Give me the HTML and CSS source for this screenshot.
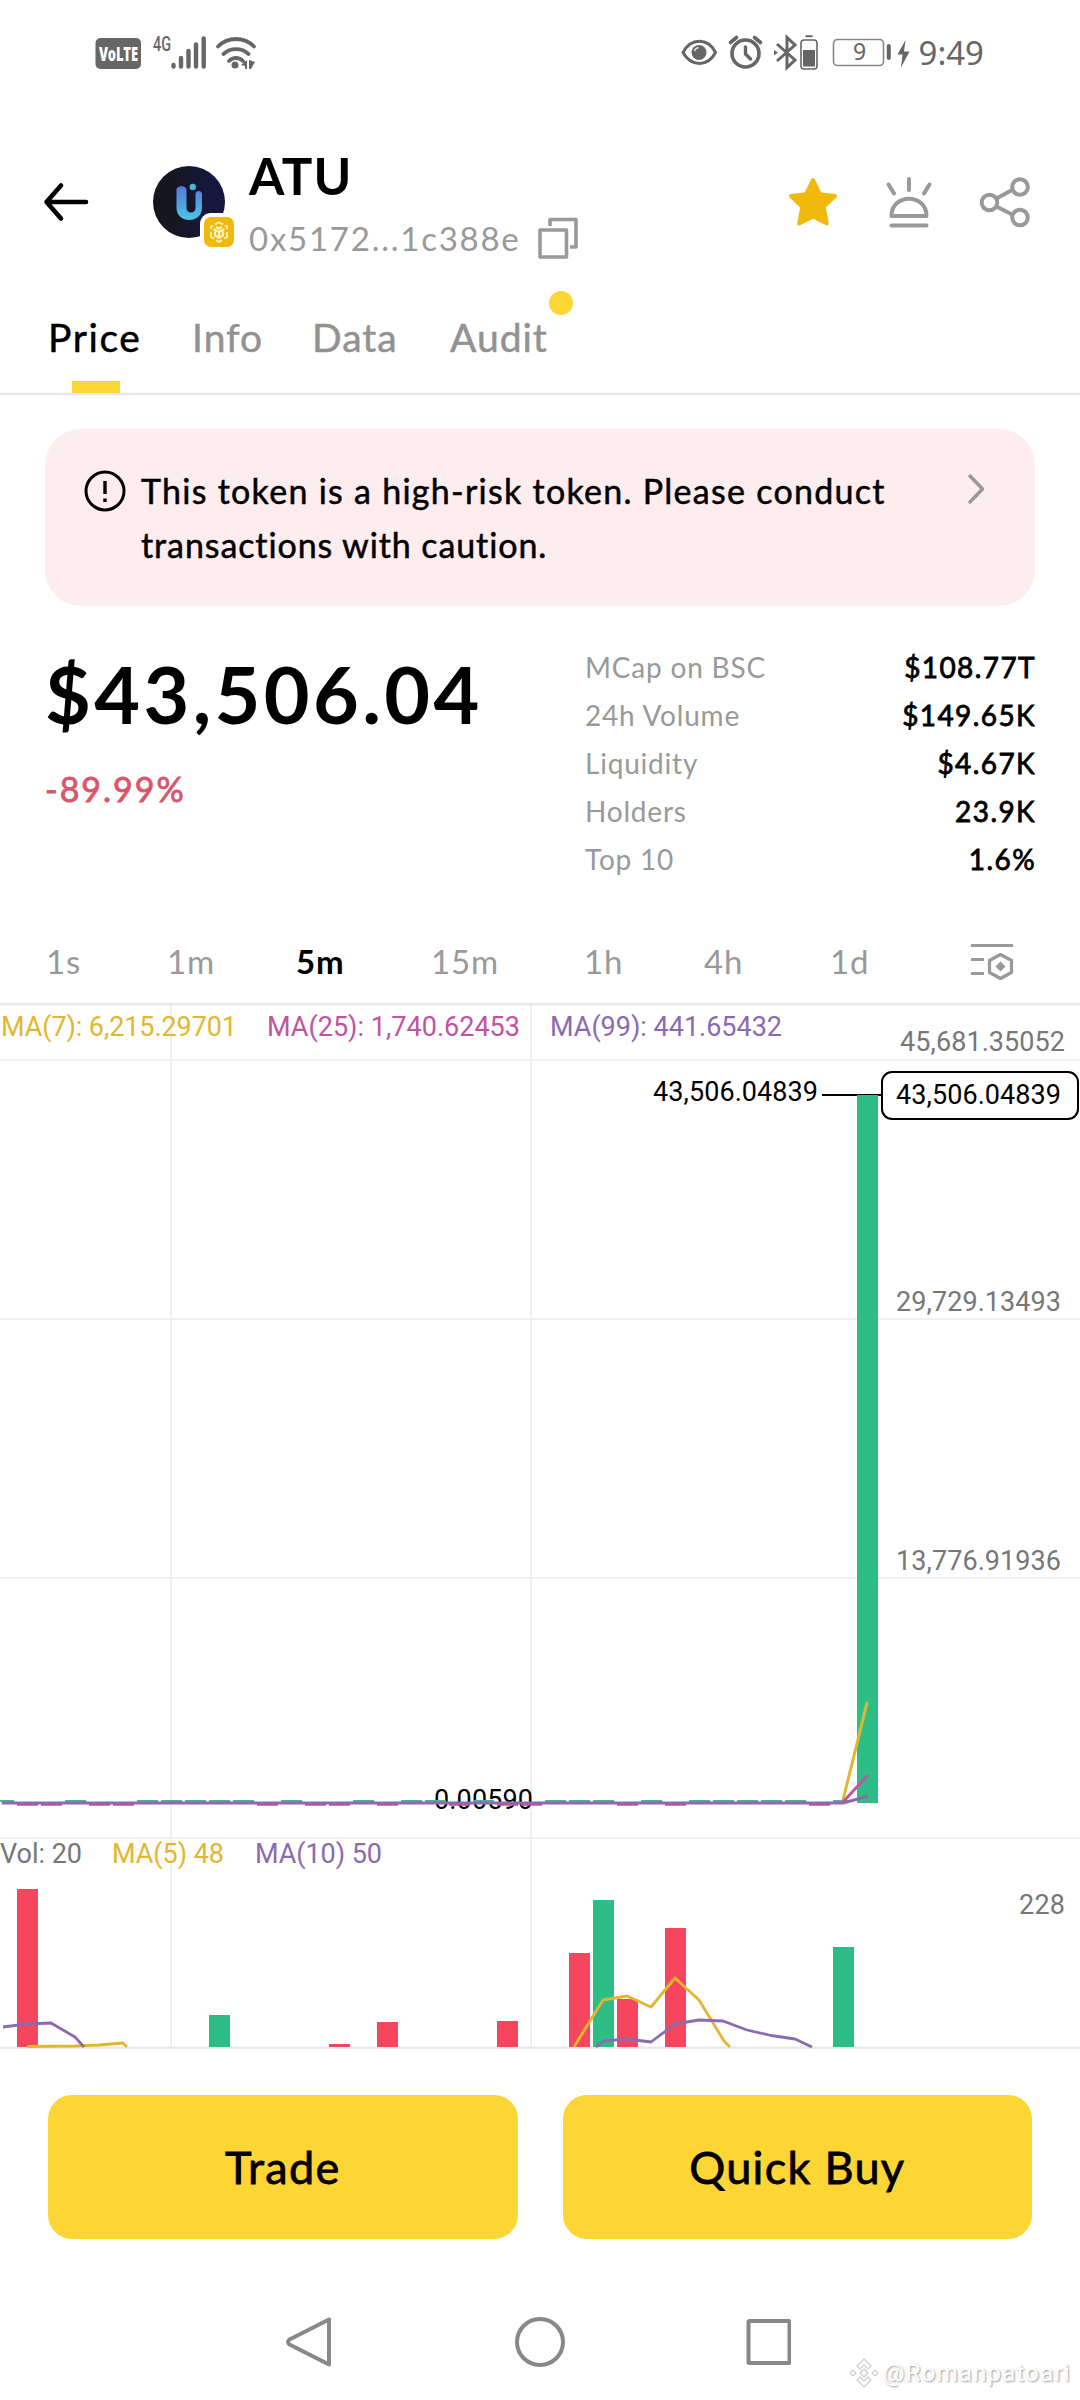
FILE: index.html
```html
<!DOCTYPE html>
<html lang="en">
<head>
    <meta charset="UTF-8">
    <meta name="viewport" content="width=device-width, initial-scale=1.0">
    <title>ATU - Price</title>
    <link rel="stylesheet" href="styles.css">
</head>
<body>
    <div class="status-bar">
        <svg class="status-left" width="165" height="40" viewBox="93 33 165 40">
            <rect x="95.5" y="38" width="45.5" height="31" rx="5" fill="#666"/>
            <text class="volte" x="99" y="60.5" textLength="39" lengthAdjust="spacingAndGlyphs">VoLTE</text>
            <text class="net" x="153" y="51" textLength="18" lengthAdjust="spacingAndGlyphs">4G</text>
            <g stroke="#666" stroke-width="4.400" stroke-linecap="round">
                <path d="M173.500 65v1.500M181 58v8.500M188.500 51v15.500M196 44.500v22M203.700 38.500v28"/>
            </g>
            <g fill="none" stroke="#666" stroke-width="3.800" stroke-linecap="round">
                <path d="M218 46.500c10-10 26-10 36 0M223.500 54c7-6.500 18-6.500 25 0M229 61c4-4 10-4 14 0"/>
            </g>
            <circle cx="235" cy="65" r="3.500" fill="#666"/>
            <path d="M241 65l6-5v9h-2v-3zM249 60l6 2-4 7h-2z" fill="#666"/>
        </svg>
        <div class="status-right">
            <svg width="235" height="40" viewBox="679 33 235 40" fill="none" stroke="#666">
                <path d="M683 52.500C691 37.500 708 37.500 715.500 52.500C708 67 691 67 683 52.500Z" stroke-width="3"/>
                <circle cx="699" cy="52.500" r="7.500" fill="#666" stroke="none"/>
                <path d="M694.500 51a5 5 0 0 1 4-3.500" stroke="#ddd" stroke-width="1.500"/>
                <circle cx="745.500" cy="53.500" r="13.500" stroke-width="3.600"/>
                <path d="M745.500 47v7l5 5" stroke-width="3.400" stroke-linecap="round"/>
                <path d="M730.500 42.500l6-5M760.500 42.500l-6-5" stroke-width="3.600" stroke-linecap="round"/>
                <path d="M777 44l18 16-8 7.500v-30l8 7.500-18 16" stroke-width="3"/>
                <path d="M774 50l4 2.500-4 3z" fill="#666" stroke="none"/>
                <rect x="801" y="40" width="16" height="29" rx="3" stroke-width="1.600"/>
                <rect x="803" y="50" width="12" height="16.500" fill="#666" stroke="none"/>
                <path d="M805.500 36.200h7" stroke-width="2"/>
                <rect x="833.500" y="39.500" width="50" height="26" rx="4" stroke="#888" stroke-width="1.600"/>
                <text class="battery" x="853" y="60">9</text>
                <path d="M888.800 46v12" stroke-width="4" stroke-linecap="round"/>
                <path d="M905.500 40l-8 14.500h5l-1.500 13 8.500-16h-5.500z" fill="#666" stroke="none"/>
            </svg>
            <span class="clock">9:49</span>
        </div>
    </div>

    <header class="header">
        <svg class="back" width="48" height="42" viewBox="0 0 48 42" fill="none" stroke="#000" stroke-width="4.600" stroke-linecap="round" stroke-linejoin="round">
            <path d="M19 4.500L4.500 21L19 37.500M4.500 21H44"/>
        </svg>
        <div class="avatar">
            <svg width="72" height="72" viewBox="0 0 72 72">
                <defs>
                    <linearGradient id="disc" x1="0" y1="0" x2="1" y2="0">
                        <stop offset="0.300" stop-color="#15161f"/>
                        <stop offset="0.800" stop-color="#16173f"/>
                    </linearGradient>
                    <linearGradient id="mark" x1="0" y1="0" x2="0" y2="1">
                        <stop offset="0" stop-color="#5878dc"/>
                        <stop offset="1" stop-color="#4bc6e6"/>
                    </linearGradient>
                </defs>
                <circle cx="36" cy="36" r="36" fill="url(#disc)"/>
                <path d="M23.500 24c0-5 10-5 10 0v18c0 6 9 6 9 0V28c0-4 6.500-4 6.500 0v14c0 16-25.500 16-25.500 0z" fill="url(#mark)"/>
                <circle cx="39.800" cy="21" r="3.200" fill="#44b8dc"/>
            </svg>
            <svg class="chain" width="38" height="38" viewBox="0 0 38 38">
                <rect width="38" height="38" rx="11" fill="#fff"/>
                <rect x="4" y="4" width="30" height="30" rx="7" fill="#f0b90b"/>
                <g fill="none" stroke="#fff3c4" stroke-width="1.800">
                    <path d="M15 11.500l4-2.200 4 2.200M11 16v-2.500l2-1M27 16v-2.500l-2-1M11 19v5l3 1.500M27 19v5l-3 1.500M16 27l3 2 3-2"/>
                    <path d="M13.500 16l5.500 3 5.500-3M19 19v7M15 18.500v4l4 2.500 4-2.500v-4M16 14l3 1.500 3-1.500" stroke-width="2.200"/>
                </g>
            </svg>
        </div>
        <div class="token">
            <h1 class="token-name">ATU</h1>
            <div class="token-address">
                <span>0x5172...1c388e</span>
                <svg width="42" height="42" viewBox="0 0 42 42" fill="none" stroke="#999" stroke-width="3.600" stroke-linejoin="round">
                    <path d="M3 13h26.500v27H3z"/>
                    <path d="M13 9V2.500h26V30h-6"/>
                </svg>
            </div>
        </div>
        <div class="header-actions">
            <svg width="52" height="52" viewBox="0 0 52 52">
                <path d="M26 4l6.800 14.200 15.200 1.900-11.300 10.700L39.800 47.500 26 40.500 12.200 47.500l3.100-16.700L4 20.100l15.200-1.900z" fill="#f0b90b" stroke="#f0b90b" stroke-width="4" stroke-linejoin="round"/>
            </svg>
            <svg width="52" height="52" viewBox="0 0 52 52" fill="none" stroke="#999" stroke-width="4" stroke-linecap="round" stroke-linejoin="round">
                <path d="M8.500 40c0-23 35-23 35 0zM8.500 49.500h35M26 3v11M5.500 8.500l5.500 9M46.500 8.500l-5.500 9"/>
            </svg>
            <svg width="52" height="52" viewBox="0 0 52 52" fill="none" stroke="#999" stroke-width="4">
                <circle cx="10.500" cy="26.500" r="7.800"/>
                <circle cx="41" cy="11" r="7.800"/>
                <circle cx="41" cy="41.500" r="7.800"/>
                <path d="M17.500 22.500L34 13.500M17.500 30.500L34 39"/>
            </svg>
        </div>
    </header>

    <nav class="tabs">
        <span class="tab tab-price active">Price</span>
        <span class="tab tab-info">Info</span>
        <span class="tab tab-data">Data</span>
        <span class="tab tab-audit">Audit</span>
    </nav>

    <div class="alert">
        <svg width="44" height="44" viewBox="0 0 44 44" fill="none" stroke="#000">
            <circle cx="22" cy="22" r="19" stroke-width="3"/>
            <path d="M22 12v13M22 29.500v3.500" stroke-width="3.400"/>
        </svg>
        <p>This token is a high-risk token. Please conduct<br><span class="line-two">transactions with caution.</span></p>
        <svg class="chevron" width="20" height="32" viewBox="0 0 20 32" fill="none" stroke="#999" stroke-width="3.500" stroke-linecap="round" stroke-linejoin="round">
            <path d="M3 3l12.500 13L3 29"/>
        </svg>
    </div>

    <section class="summary">
        <div class="quote">
            <div class="price">$43,506.04</div>
            <div class="change">-89.99%</div>
        </div>
        <dl class="stats">
            <div><dt>MCap on BSC</dt><dd>$108.77T</dd></div>
            <div><dt>24h Volume</dt><dd>$149.65K</dd></div>
            <div><dt>Liquidity</dt><dd>$4.67K</dd></div>
            <div><dt>Holders</dt><dd>23.9K</dd></div>
            <div><dt>Top 10</dt><dd>1.6%</dd></div>
        </dl>
    </section>

    <div class="intervals">
        <span>1s</span>
        <span>1m</span>
        <span class="active">5m</span>
        <span>15m</span>
        <span>1h</span>
        <span>4h</span>
        <span>1d</span>
        <svg width="46" height="40" viewBox="0 0 46 40" fill="none" stroke="#999" stroke-width="3.200">
            <path d="M2 3.500h42M2 17.500h13M2 31.500h13"/>
            <path d="M31.500 12.500l11 6v12l-11 6-11-6v-12z" stroke-linejoin="round"/>
            <path d="M31.500 19.500l5 5-5 5-5-5z" fill="#999" stroke="none"/>
        </svg>
    </div>

    <svg class="chart" width="1080" height="1046" viewBox="0 1003 1080 1046">
        <!-- grid -->
        <g stroke="#f0f0f0" stroke-width="2">
            <path d="M171 1005V2048M531 1005V2048"/>
            <path d="M0 1060H1080M0 1319H1080M0 1578H1080M0 1838H1080"/>
            <path d="M0 1004H1080M0 2048H1080" stroke="#e9e9e9" stroke-width="3"/>
        </g>

        <g class="yellow">
            <text x="1" y="1036" textLength="236">MA(7): 6,215.29701</text>
            <text x="112" y="1863" textLength="112">MA(5) 48</text>
        </g>
        <text class="pink" x="267" y="1036" textLength="253">MA(25): 1,740.62453</text>
        <g class="purple">
            <text x="550" y="1036" textLength="232">MA(99): 441.65432</text>
            <text x="255" y="1863" textLength="127">MA(10) 50</text>
        </g>
        <text x="0" y="1863" textLength="82">Vol: 20</text>

        <text x="900" y="1051" textLength="165">45,681.35052</text>
        <text x="896" y="1311" textLength="165">29,729.13493</text>
        <text x="896" y="1570" textLength="165">13,776.91936</text>
        <text x="1019" y="1914" textLength="46">228</text>
        <text class="dark" x="653" y="1101" textLength="165">43,506.04839</text>
        <text class="dark" x="434" y="1809" textLength="99">0.00590</text>

        <!-- candles -->
        <path d="M822 1095H882" stroke="#000" stroke-width="2"/>
        <rect x="857" y="1095" width="21" height="708" fill="#2ebd85"/>
        <path d="M0 1801H14M65 1801h21M137 1801h21M161 1801h21M185 1801h21M209 1801h21M233 1801h21M281 1801h21M353 1801h21M401 1801h21M425 1801h21M473 1801h21M545 1801h21M569 1801h21M593 1801h21M641 1801h21M689 1801h21M713 1801h21M737 1801h21M761 1801h21M785 1801h21M833 1801h21" stroke="#4fae94" stroke-width="2"/>
        <path d="M17 1804.500h21M41 1804.500h21M89 1804.500h21M113 1804.500h21M257 1804.500h21M305 1804.500h21M329 1804.500h21M377 1804.500h21M449 1804.500h21M497 1804.500h21M521 1804.500h21M617 1804.500h21M665 1804.500h21M809 1804.500h21" stroke="#cf4b88" stroke-width="2.600"/>
        <g fill="none" stroke-width="3" stroke-linejoin="round" stroke-linecap="round">
            <path d="M843 1800L867 1703" stroke="#e2b72f"/>
            <path d="M843 1802L867 1776" stroke="#c053a2"/>
            <path d="M3 1803H843L867 1796.500" stroke="#8b6bb0"/>
        </g>

        <!-- last price tag -->
        <rect x="882" y="1072" width="196" height="47" rx="10" fill="#fff" stroke="#000" stroke-width="2"/>
        <text class="dark" x="896" y="1104" textLength="165">43,506.04839</text>

        <!-- volume -->
        <g fill="#f6465d">
            <rect x="17" y="1889" width="21" height="158"/>
            <rect x="329" y="2044" width="21" height="3"/>
            <rect x="377" y="2022" width="21" height="25"/>
            <rect x="497" y="2021" width="21" height="26"/>
            <rect x="569" y="1953" width="21" height="94"/>
            <rect x="617" y="1999" width="21" height="48"/>
            <rect x="665" y="1928" width="21" height="119"/>
        </g>
        <g fill="#2ebd85">
            <rect x="209" y="2015" width="21" height="32"/>
            <rect x="593" y="1900" width="21" height="147"/>
            <rect x="833" y="1947" width="21" height="100"/>
        </g>
        <g fill="none" stroke-width="2.800" stroke-linejoin="round">
            <path d="M27 2046.500L75 2046L99 2045L123 2043L127 2047M574 2047L603 2000L627 1996L651 2007L675 1978L699 2000L724 2041L730 2047" stroke="#e2b72f"/>
            <path d="M3 2027L27 2024L51 2023L75 2037L84 2047M596 2047L604 2041L627 2039L651 2042L675 2024L699 2020L723 2021L747 2030L771 2035.500L795 2039L812 2047" stroke="#8b6bb0"/>
        </g>
    </svg>

    <div class="actions">
        <button class="btn btn-trade">Trade</button>
        <button class="btn btn-buy">Quick Buy</button>
    </div>

    <footer class="system-nav">
        <svg width="506" height="54" viewBox="285 2315 506 54" fill="none" stroke="#888" stroke-width="4" stroke-linejoin="round">
            <path d="M329 2319.500V2364.500L289.500 2344.500Q286.500 2342 289.500 2339.500Z"/>
            <circle cx="540" cy="2342" r="23"/>
            <rect x="748.500" y="2321" width="41" height="42" rx="1"/>
        </svg>
        <div class="watermark">
            <svg width="30" height="30" viewBox="0 0 30 30" fill="#fff" stroke="#ccc" stroke-width="1.200">
                <path d="M15 1l7 7-3 3-4-4-4 4-3-3zM15 29l7-7-3-3-4 4-4-4-3 3zM15 11l4 4-4 4-4-4zM1 15l3-3 3 3-3 3zM29 15l-3-3-3 3 3 3z"/>
            </svg>
            <span>@Romanpatoari</span>
        </div>
    </footer>
</body>
</html>
```
FILE: styles.css
```css
* {
    box-sizing: border-box;
}
body {
    margin: 0;
    width: 1080px;
    height: 2400px;
    overflow: hidden;
    background-color: #fff;
    color: #000;
    font-family: Lato, "Open Sans", sans-serif;
}
svg {
    display: block;
    flex: none;
}

/* Status bar */
.status-bar {
    display: flex;
    justify-content: space-between;
    height: 140px;
    padding: 33px 96px 0 93px;
}
.status-right {
    display: flex;
    gap: 5px;
}
.clock {
    font-family: "Noto Sans", sans-serif;
    font-size: 33px;
    line-height: 40px;
    color: #666;
}
.status-bar text {
    fill: #666;
    stroke: none;
    font-family: "Noto Sans", sans-serif;
}
.status-bar .volte {
    fill: #fff;
    font-size: 20px;
    font-weight: 900;
}
.status-bar .net {
    font-family: Roboto, sans-serif;
    font-size: 20px;
    font-weight: 500;
}
.status-bar .battery {
    font-size: 23px;
}

/* Token header */
.header {
    display: flex;
    height: 140px;
    padding: 0 49px 0 42px;
}
.back {
    margin: 41px 63px 0 0;
}
.avatar {
    position: relative;
    width: 72px;
    height: 72px;
    margin: 26px 24px 0 0;
}
.chain {
    position: absolute;
    left: 47px;
    top: 47px;
}
.token {
    flex: 1;
}
.token-name {
    margin: 6px 0 0;
    font-size: 51px;
    line-height: 60px;
    font-weight: 700;
    letter-spacing: 1px;
}
.token-address {
    display: flex;
    align-items: center;
    gap: 16px;
    height: 42px;
    margin-top: 11px;
    font-size: 33px;
    letter-spacing: 1.75px;
    color: #999;
}
.header-actions {
    display: flex;
    gap: 44px;
    padding-top: 36px;
}

/* Tabs */
.tabs {
    display: flex;
    height: 115px;
    padding: 32px 0 0 48px;
    border-bottom: 2px solid #e6e6e6;
    font-size: 39px;
    line-height: 50px;
    letter-spacing: 1px;
    color: #929292;
}
.tab {
    position: relative;
    -webkit-text-stroke: 0.5px;
}
.tab-price {
    width: 144px;
    letter-spacing: 1.6px;
}
.tab-info {
    width: 120px;
}
.tab-data {
    width: 138px;
}
.tab.active {
    color: #000;
}
.tab.active::after {
    content: "";
    position: absolute;
    left: 24px;
    top: 69px;
    width: 48px;
    height: 12px;
    background-color: #fdd535;
}
.tab-audit::after {
    content: "";
    position: absolute;
    left: 99px;
    top: -21px;
    width: 24px;
    height: 24px;
    border-radius: 50%;
    background-color: #fdd535;
}

/* Risk warning */
.alert {
    display: flex;
    height: 177px;
    margin: 34px 45px 0;
    padding: 35px 48px 0 38px;
    border-radius: 36px;
    background-color: #feedef;
}
.alert > svg {
    margin-top: 5px;
}
.alert p {
    flex: 1;
    margin: 0 0 0 14px;
    font-size: 34px;
    line-height: 54px;
    letter-spacing: 1.27px;
    white-space: nowrap;
    -webkit-text-stroke: 0.5px;
}
.alert .line-two {
    letter-spacing: 0.9px;
}
.alert > .chevron {
    margin-top: 9px;
}

/* Price and stats */
.summary {
    display: flex;
    justify-content: space-between;
    height: 314px;
    padding: 37px 45px 0;
}
.price {
    margin-top: 3px;
    font-size: 79px;
    line-height: 96px;
    font-weight: 700;
    letter-spacing: 3.4px;
}
.change {
    margin-top: 25px;
    font-size: 34px;
    line-height: 44px;
    letter-spacing: 2px;
    color: #d9556b;
    -webkit-text-stroke: 0.8px;
}
.stats {
    width: 450px;
    margin: 0;
}
.stats div {
    display: flex;
    justify-content: space-between;
    font-size: 28px;
    line-height: 48px;
}
.stats dt {
    letter-spacing: 0.8px;
    color: #999;
}
.stats dd {
    margin: 0 -1px 0 0;
    letter-spacing: 1.4px;
    -webkit-text-stroke: 0.8px;
}

/* Chart */
.intervals {
    display: grid;
    grid-template-columns: 121px 129px 135px 153px 120px 126px 139px auto;
    align-items: center;
    height: 83px;
    padding-left: 46px;
    font-size: 33px;
    line-height: 44px;
    letter-spacing: 0.8px;
    color: #999;
}
.intervals span {
    padding-bottom: 2px;
}
.intervals .active {
    color: #000;
    font-weight: 700;
}
.chart text {
    font-family: Roboto, sans-serif;
    font-size: 27px;
    fill: #777;
}
.chart .yellow text {
    fill: #e2b72f;
}
.chart .pink {
    fill: #c053a2;
}
.chart .purple text {
    fill: #8b6bb0;
}
.chart .dark {
    fill: #000;
}

/* Bottom buttons */
.actions {
    display: flex;
    gap: 45px;
    height: 236px;
    padding: 46px 48px 0;
}
.btn {
    flex: 1;
    height: 144px;
    padding: 0;
    border: none;
    border-radius: 24px;
    background-color: #fdd535;
    color: #000;
    font-family: inherit;
    font-size: 45px;
    letter-spacing: 1.3px;
    -webkit-text-stroke: 0.8px;
}
.system-nav {
    position: relative;
    height: 115px;
    padding: 30px 0 0 285px;
}
.watermark {
    position: absolute;
    left: 849px;
    top: 73px;
    display: flex;
    align-items: center;
    gap: 4px;
    font-family: Roboto, sans-serif;
    font-size: 24px;
    letter-spacing: 1.2px;
    color: #fff;
    text-shadow: 1px 1px 2px #999;
}
```
